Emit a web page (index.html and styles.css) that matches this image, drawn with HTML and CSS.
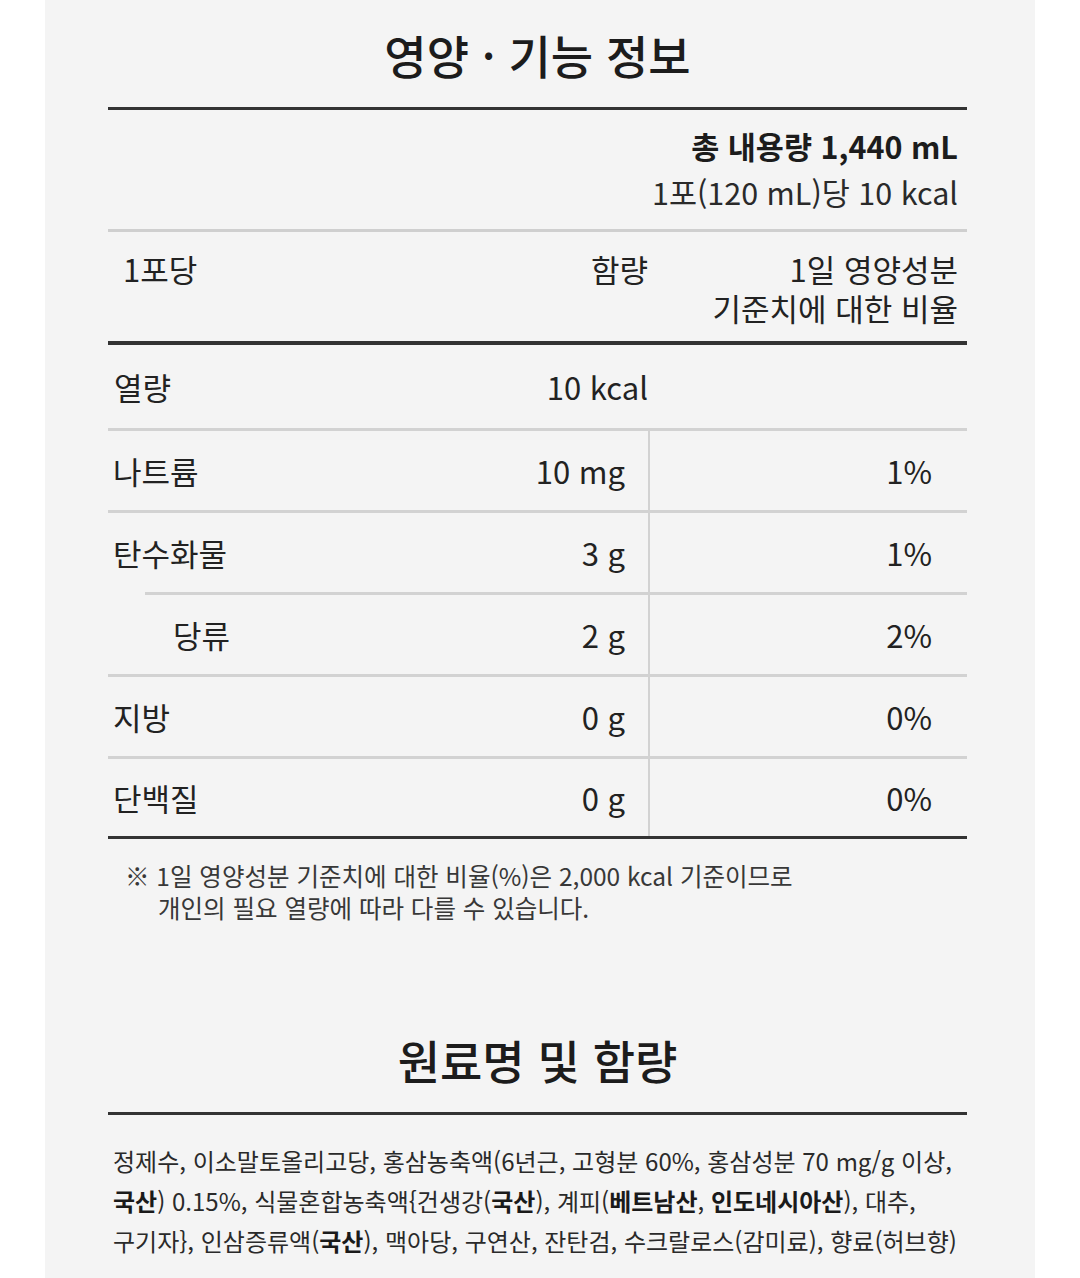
FILE: index.html
```html
<!DOCTYPE html>
<html lang="ko">
<head>
<meta charset="utf-8">
<title>영양 · 기능 정보</title>
<link rel="stylesheet" href="styles.css">
</head>
<body>
<main class="page">
  <h2 class="section-title">영양 · 기능 정보</h2>
  <section class="nutri">
    <div class="summary">
      <p class="total">총 내용량 1,440 mL</p>
      <p class="per">1포(120 mL)당 10 kcal</p>
    </div>
    <div class="head-row">
      <span class="head-label">1포당</span>
      <span class="head-amount">함량</span>
      <span class="head-pct">1일 영양성분<br>기준치에 대한 비율</span>
    </div>
    <div class="row row-kcal">
      <div class="cell-main"><span class="label">열량</span><span class="amount">10 kcal</span></div>
      <div class="cell-empty"></div>
    </div>
    <div class="row">
      <div class="cell-main"><span class="label">나트륨</span><span class="amount">10 mg</span></div>
      <div class="cell-pct">1%</div>
    </div>
    <div class="row">
      <div class="cell-main"><span class="label">탄수화물</span><span class="amount">3 g</span></div>
      <div class="cell-pct">1%</div>
    </div>
    <div class="row row-sub">
      <div class="cell-main"><span class="label">당류</span><span class="amount">2 g</span></div>
      <div class="cell-pct">2%</div>
    </div>
    <div class="row">
      <div class="cell-main"><span class="label">지방</span><span class="amount">0 g</span></div>
      <div class="cell-pct">0%</div>
    </div>
    <div class="row row-last">
      <div class="cell-main"><span class="label">단백질</span><span class="amount">0 g</span></div>
      <div class="cell-pct">0%</div>
    </div>
  </section>
  <p class="note">※ 1일 영양성분 기준치에 대한 비율(%)은 2,000 kcal 기준이므로<br>개인의 필요 열량에 따라 다를 수 있습니다.</p>

  <h2 class="section-title section-title-2">원료명 및 함량</h2>
  <section class="ingredients">
    <p>정제수, 이소말토올리고당, 홍삼농축액(6년근, 고형분 60%, 홍삼성분 70 mg/g 이상,<br><b>국산</b>) 0.15%, 식물혼합농축액{건생강(<b>국산</b>), 계피(<b>베트남산</b>, <b>인도네시아산</b>), 대추,<br>구기자}, 인삼증류액(<b>국산</b>), 맥아당, 구연산, 잔탄검, 수크랄로스(감미료), 향료(허브향)</p>
  </section>
</main>
</body>
</html>
```

FILE: styles.css
```css
* { box-sizing: border-box; }

html, body {
  margin: 0;
  padding: 0;
  background: #ffffff;
}

body {
  font-family: "Noto Sans CJK KR", "Noto Sans", sans-serif;
  color: #222222;
}

.page {
  width: 990px;
  min-height: 1278px;
  margin-left: 45px;
  background: #f4f4f4;
  padding: 0 68px 0 63px;
}

.section-title {
  margin: 0;
  height: 107px;
  display: flex;
  align-items: center;
  justify-content: center;
  font-size: 46px;
  font-weight: 500;
  color: #1c1c1c;
}

.nutri {
  border-top: 3px solid #333333;
  border-bottom: 3px solid #333333;
}

.summary {
  text-align: right;
  padding: 13px 9px 14px 0;
  border-bottom: 3px solid #cfcfcf;
}

.summary p {
  margin: 0;
  font-size: 30.5px;
  line-height: 46px;
}

.summary .total {
  font-weight: 700;
  color: #1c1c1c;
}

.summary .per {
  color: #2a2a2a;
}

.head-row {
  display: grid;
  grid-template-columns: 525px 1fr;
  grid-template-areas: "lab amt";
  padding: 17px 9px 14px 15px;
  font-size: 31px;
  line-height: 39px;
  border-bottom: 4px solid #333333;
}

.head-label { grid-area: lab; }

.head-amount {
  grid-area: lab;
  justify-self: end;
}

.head-pct {
  grid-area: amt;
  text-align: right;
}

.row {
  display: grid;
  grid-template-columns: 1fr 319px;
  min-height: 82px;
  font-size: 31px;
}

.row + .row {
  border-top: 3px solid #d2d2d2;
}

.row-kcal {
  min-height: 83px;
}

.row-kcal .cell-main {
  padding: 0 0 0 6px;
}

.cell-main {
  display: flex;
  align-items: center;
  justify-content: space-between;
  padding: 0 23px 0 5px;
}

.cell-pct {
  display: flex;
  align-items: center;
  justify-content: flex-end;
  padding-right: 35px;
  border-left: 2px solid #d2d2d2;
}

.row-sub {
  margin-left: 37px;
}

.row-sub .cell-main {
  padding-left: 28px;
}

.row-last {
  min-height: 80px;
}

.note {
  margin: 21px 0 0 0;
  padding-left: 50px;
  text-indent: -33px;
  font-size: 24.5px;
  line-height: 32px;
  color: #383838;
}

.section-title-2 {
  margin-top: 81px;
}

.ingredients {
  border-top: 3px solid #333333;
  padding: 26px 0 0 5px;
}

.ingredients p {
  margin: 0;
  font-size: 24px;
  line-height: 40px;
  color: #2a2a2a;
  white-space: nowrap;
}

.ingredients b {
  font-weight: 700;
  color: #1a1a1a;
}
```
